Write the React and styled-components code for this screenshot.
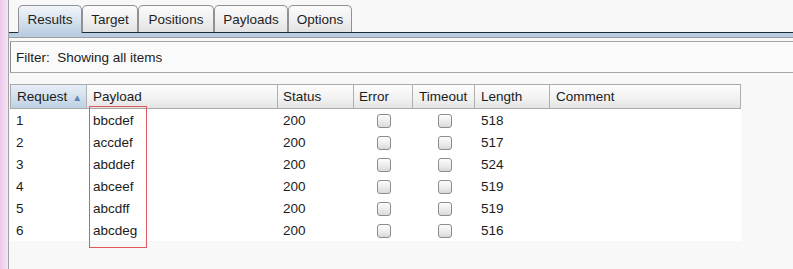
import React from "react";
import styled, { createGlobalStyle } from "styled-components";

const Global = createGlobalStyle`
  html, body { margin: 0; padding: 0; background: #f8f8f8; }
  body { font-family: "Liberation Sans", Arial, sans-serif; font-size: 13.5px; color: #1c1c1c; }
`;

const Frame = styled.div`
  display: flex;
  width: 793px;
  height: 269px;
  overflow: hidden;
  background: #f8f8f8;
`;

const SideStrip = styled.div`
  width: 8px;
  flex: none;
  background: linear-gradient(to right, #ecc9ec, #f5e6f5);
  border-right: 1px solid #a2a2a2;
`;

const Main = styled.div`
  flex: 1;
  display: flex;
  flex-direction: column;
  min-width: 0;
`;

const TabBar = styled.div`
  display: flex;
  align-items: flex-end;
  padding: 5px 0 0 9px;
  height: 32px;
  box-sizing: border-box;
`;

const Tab = styled.div`
  box-sizing: border-box;
  width: ${(p) => p.$w}px;
  display: flex;
  align-items: center;
  justify-content: center;
  border: 1px solid #8f9194;
  border-bottom: none;
  border-radius: 5px 5px 0 0;
  color: #1e1e1e;
  background: ${(p) =>
    p.$active
      ? "linear-gradient(to bottom, #f2f6fa 0%, #d5e2ee 55%, #bccfe2 100%)"
      : "linear-gradient(to bottom, #fbfbfb 0%, #eeeeee 60%, #e2e2e2 100%)"};
  position: relative;
  z-index: ${(p) => (p.$active ? 2 : 1)};
  margin-bottom: ${(p) => (p.$active ? "-1px" : "0")};
  height: ${(p) => (p.$active ? 28 : 27)}px;
  padding-bottom: ${(p) => (p.$active ? 1 : 0)}px;
`;

const TabBand = styled.div`
  height: 4px;
  background: #b9cde2;
  border-top: 1px solid #1f2a3a;
  border-bottom: 1px solid #9c9c9c;
`;

const Body = styled.div`
  display: flex;
  flex-direction: column;
  padding: 3px 0 0 1px;
`;

const FilterBox = styled.div`
  height: 32px;
  box-sizing: border-box;
  border: 1px solid #a6a6a6;
  border-left-color: #8c8c8c;
  border-right: none;
  background: #fafafa;
  display: flex;
  align-items: center;
  padding-left: 5px;
`;

const TableWrap = styled.div`
  position: relative;
  margin-top: 11px;
  width: 731px;
`;

const Grid = styled.div`
  display: grid;
  grid-template-columns: 77px 191px 76px 59px 62px 75px 191px;
`;

const HeadCell = styled.div`
  height: 25px;
  box-sizing: border-box;
  display: flex;
  align-items: center;
  padding-left: ${(p) => p.$pad ?? 6}px;
  border-top: 1px solid #a9a9a9;
  border-bottom: 1px solid #a9a9a9;
  border-right: 1px solid #b0b0b0;
  border-left: ${(p) => (p.$first ? "1px solid #a9a9a9" : "none")};
  color: #1c1c1c;
  white-space: nowrap;
  background: ${(p) =>
    p.$sorted
      ? "linear-gradient(to bottom, #e6eef6 0%, #cfdeec 60%, #bed1e4 100%)"
      : "linear-gradient(to bottom, #fdfdfd 0%, #f1f1f1 60%, #e4e4e4 100%)"};
`;

const SortArrow = styled.span`
  font-size: 10px;
  color: #5f87b5;
  margin-left: 5px;
  margin-top: 1px;
`;

const Cell = styled.div`
  height: 22px;
  box-sizing: border-box;
  background: #ffffff;
  display: flex;
  align-items: center;
  justify-content: ${(p) => (p.$center ? "center" : "flex-start")};
  padding-left: ${(p) => (p.$center ? 0 : p.$pad ?? 6)}px;
  padding-top: 1px;
`;

const Check = styled.span`
  width: 14px;
  height: 14px;
  box-sizing: border-box;
  border: 1px solid #8d8d8d;
  border-radius: 3px;
  background: linear-gradient(to bottom, #fcfcfc 0%, #ececec 55%, #d9d9d9 100%);
  margin-left: 1px;
`;

const Highlight = styled.div`
  position: absolute;
  left: 79px;
  top: 22px;
  width: 58px;
  height: 142px;
  box-sizing: border-box;
  border: 1px solid #e0585a;
  pointer-events: none;
`;

const tabs = [
  { label: "Results", w: 64, active: true },
  { label: "Target", w: 56 },
  { label: "Positions", w: 76 },
  { label: "Payloads", w: 74 },
  { label: "Options", w: 64 },
];

const rows = [
  [1, "bbcdef", 200, 518],
  [2, "accdef", 200, 517],
  [3, "abddef", 200, 524],
  [4, "abceef", 200, 519],
  [5, "abcdff", 200, 519],
  [6, "abcdeg", 200, 516],
];

export default function App() {
  return (
    <>
      <Global />
      <Frame>
        <SideStrip />
        <Main>
          <TabBar>
            {tabs.map((t) => (
              <Tab key={t.label} $w={t.w} $active={t.active}>
                {t.label}
              </Tab>
            ))}
          </TabBar>
          <TabBand />
          <Body>
            <FilterBox>Filter:&nbsp; Showing all items</FilterBox>
            <TableWrap>
              <Grid>
                <HeadCell $first $sorted>
                  Request<SortArrow>▲</SortArrow>
                </HeadCell>
                <HeadCell>Payload</HeadCell>
                <HeadCell $pad={5}>Status</HeadCell>
                <HeadCell $pad={5}>Error</HeadCell>
                <HeadCell $pad={6}>Timeout</HeadCell>
                <HeadCell $pad={6}>Length</HeadCell>
                <HeadCell $pad={6}>Comment</HeadCell>
                {rows.map(([n, p, s, l]) => (
                  <React.Fragment key={n}>
                    <Cell $pad={6}>{n}</Cell>
                    <Cell $pad={6}>{p}</Cell>
                    <Cell $pad={5}>{s}</Cell>
                    <Cell $center>
                      <Check />
                    </Cell>
                    <Cell $center>
                      <Check />
                    </Cell>
                    <Cell $pad={6}>{l}</Cell>
                    <Cell />
                  </React.Fragment>
                ))}
              </Grid>
              <Highlight />
            </TableWrap>
          </Body>
        </Main>
      </Frame>
    </>
  );
}
